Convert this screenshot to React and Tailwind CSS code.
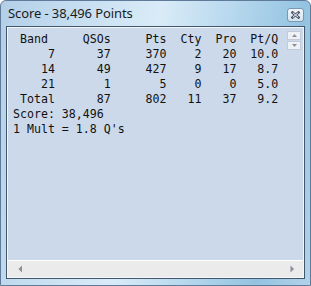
import React from "react";

const header = " Band     QSOs     Pts  Cty  Pro  Pt/Q";

const rows = [
  ["7", "37", "370", "2", "20", "10.0"],
  ["14", "49", "427", "9", "17", "8.7"],
  ["21", "1", "5", "0", "0", "5.0"],
  ["Total", "87", "802", "11", "37", "9.2"],
];

const widths = [6, 8, 8, 5, 5, 6];

// each row is padded like the old fixed-width report
const fmt = (r) => r.map((v, i) => v.padStart(widths[i])).join("");

function CloseIcon() {
  return (
    <svg width="9" height="8" viewBox="0 0 9 8">
      <path d="M1.5 1.5 L7.5 6.5 M7.5 1.5 L1.5 6.5" stroke="#4a5566" strokeWidth="2.6" strokeLinecap="square" />
      <path d="M1.8 1.7 L7.2 6.3 M7.2 1.7 L1.8 6.3" stroke="#f4f6f9" strokeWidth="1" />
    </svg>
  );
}

function Arrow({ dir }) {
  const d = {
    up: "M1 4 L3.5 1 L6 4 Z",
    down: "M1 1 L3.5 4 L6 1 Z",
    left: "M4 0.5 L4 7.5 L0.5 4 Z",
    right: "M0.5 0.5 L0.5 7.5 L4 4 Z",
  }[dir];
  const vert = dir === "up" || dir === "down";
  return (
    <svg width={vert ? 7 : 5} height={vert ? 5 : 8} viewBox={vert ? "0 0 7 5" : "0 0 5 8"}>
      <path d={d} fill="#8a9099" />
    </svg>
  );
}

export default function App() {
  return (
    <div className="w-[311px] h-[286px] flex flex-col border border-[#5f7b99] rounded-t-[6px] bg-[linear-gradient(100deg,#b3cfe8_0%,#c9e0f2_25%,#d9ebf7_45%,#b7d8ee_65%,#93c3e1_85%,#b2d2ea_100%)]">
      {/* title bar */}
      <div className="h-[25px] flex items-center justify-between pl-[7px] pr-[6px]">
        <span className="text-[13px] text-[#1b1b1b] font-['Noto_Sans',sans-serif] tracking-[-0.1px]">
          Score - 38,496 Points
        </span>
        <div className="w-[17px] h-[14px] mt-[2px] flex items-center justify-center rounded-[3px] border border-[#7d97b2] bg-[linear-gradient(#f2f7fb,#d3e2ef)]">
          <CloseIcon />
        </div>
      </div>

      {/* client area */}
      <div className="mx-[5px] h-[253px] border border-[#42566c] flex flex-col">
        <div className="flex-1 flex flex-col border border-[#f3f7fb]">
          <div className="flex-1 flex bg-[#cbd9ea]">
            <pre className="flex-1 pl-[5px] pt-[4px] font-['DejaVu_Sans_Mono',monospace] text-[11.6px] leading-[15px] text-[#111]">
              {header + "\n" + rows.map(fmt).join("\n") + "\nScore: 38,496\n1 Mult = 1.8 Q's"}
            </pre>
            <div className="mt-[3px] mr-[2px] w-[14px] flex flex-col gap-[1px]">
              <div className="h-[9px] flex items-center justify-center border border-[#c3ccd6] bg-[#eef1f5]">
                <Arrow dir="up" />
              </div>
              <div className="h-[9px] flex items-center justify-center border border-[#c3ccd6] bg-[#eef1f5]">
                <Arrow dir="down" />
              </div>
            </div>
          </div>
          {/* horizontal scrollbar */}
          <div className="h-[17px] border-t border-white bg-[#ebebeb] flex items-center justify-between pl-[10px] pr-[8px]">
            <Arrow dir="left" />
            <Arrow dir="right" />
          </div>
        </div>
      </div>
    </div>
  );
}
